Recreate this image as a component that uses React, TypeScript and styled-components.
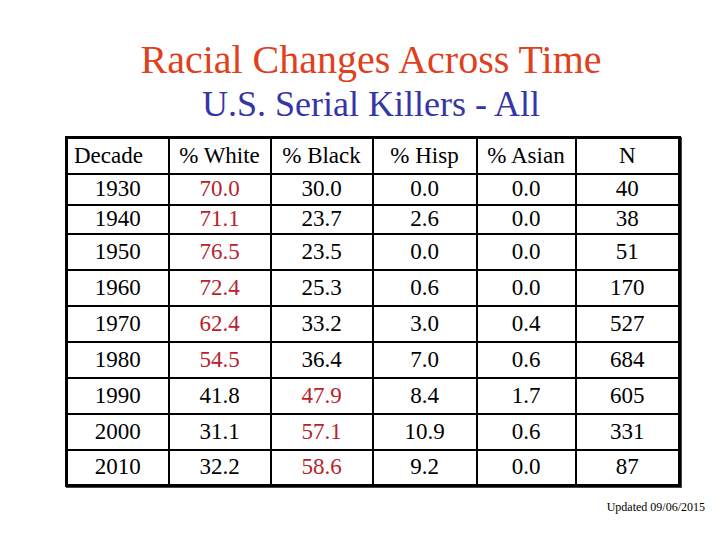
import React from "react";
import styled, { createGlobalStyle } from "styled-components";

const Global = createGlobalStyle`
  body { margin: 0; background: #ffffff; font-family: "Liberation Serif", serif; }
`;

const Slide = styled.div`
  width: 720px;
  height: 540px;
  display: flex;
  flex-direction: column;
  background: #fff;
  font-family: "Liberation Serif", serif;
`;

const Title = styled.h1`
  margin: 0;
  padding: 37px 0 0 22px;
  font-family: "Liberation Serif", serif;
  font-weight: normal;
  font-size: 40px;
  line-height: 46px;
  text-align: center;
  color: #e0401c;
`;

const Subtitle = styled.h2`
  margin: 0;
  padding-left: 22px;
  font-family: "Liberation Serif", serif;
  font-weight: normal;
  font-size: 36px;
  line-height: 42px;
  text-align: center;
  color: #3535a8;
`;

const Table = styled.table`
  margin: 11px 0 0 65px;
  width: 613px;
  border-collapse: collapse;
  border: 3px solid #000;
  box-shadow: 1px 1px 0 #444;
  table-layout: fixed;
  font-family: "Liberation Serif", serif;
  font-size: 23px;
  color: #000;
`;

const Row = styled.tr<{ $h: number }>`
  height: ${(p) => p.$h}px;
`;

const Cell = styled.td<{ $red?: boolean; $left?: boolean }>`
  border: 2px solid #000;
  padding: 0 ${(p) => (p.$left ? "6px" : "0")};
  font-family: "Liberation Serif", serif;
  text-align: ${(p) => (p.$left ? "left" : "center")};
  color: ${(p) => (p.$red ? "#b8222a" : "#000")};
  line-height: 26px;
  vertical-align: middle;
  white-space: nowrap;
`;

const Footer = styled.div`
  margin-top: 13px;
  padding-right: 15px;
  text-align: right;
  font-family: "Liberation Serif", serif;
  font-size: 12px;
  color: #000;
`;

type R = { d: string; v: string[]; red: number; h: number };

const rows: R[] = [
  { d: "1930", v: ["70.0", "30.0", "0.0", "0.0", "40"], red: 0, h: 31 },
  { d: "1940", v: ["71.1", "23.7", "2.6", "0.0", "38"], red: 0, h: 29 },
  { d: "1950", v: ["76.5", "23.5", "0.0", "0.0", "51"], red: 0, h: 36 },
  { d: "1960", v: ["72.4", "25.3", "0.6", "0.0", "170"], red: 0, h: 36 },
  { d: "1970", v: ["62.4", "33.2", "3.0", "0.4", "527"], red: 0, h: 36 },
  { d: "1980", v: ["54.5", "36.4", "7.0", "0.6", "684"], red: 0, h: 36 },
  { d: "1990", v: ["41.8", "47.9", "8.4", "1.7", "605"], red: 1, h: 36 },
  { d: "2000", v: ["31.1", "57.1", "10.9", "0.6", "331"], red: 1, h: 36 },
  { d: "2010", v: ["32.2", "58.6", "9.2", "0.0", "87"], red: 1, h: 36 },
];

const widths = [102, 102, 102, 104, 99, 104];
const headers = ["% White", "% Black", "% Hisp", "% Asian", "N"];

export default function App() {
  return (
    <Slide>
      <Global />
      <Title>Racial Changes Across Time</Title>
      <Subtitle>U.S. Serial Killers - All</Subtitle>
      <Table>
        <colgroup>
          {widths.map((w, i) => (
            <col key={i} style={{ width: w }} />
          ))}
        </colgroup>
        <tbody>
          <Row $h={36}>
            <Cell $left>Decade</Cell>
            {headers.map((h) => (
              <Cell key={h}>{h}</Cell>
            ))}
          </Row>
          {rows.map((r) => (
            <Row key={r.d} $h={r.h}>
              <Cell>{r.d}</Cell>
              {r.v.map((v, i) => (
                <Cell key={i} $red={i === r.red}>
                  {v}
                </Cell>
              ))}
            </Row>
          ))}
        </tbody>
      </Table>
      <Footer>Updated 09/06/2015</Footer>
    </Slide>
  );
}
